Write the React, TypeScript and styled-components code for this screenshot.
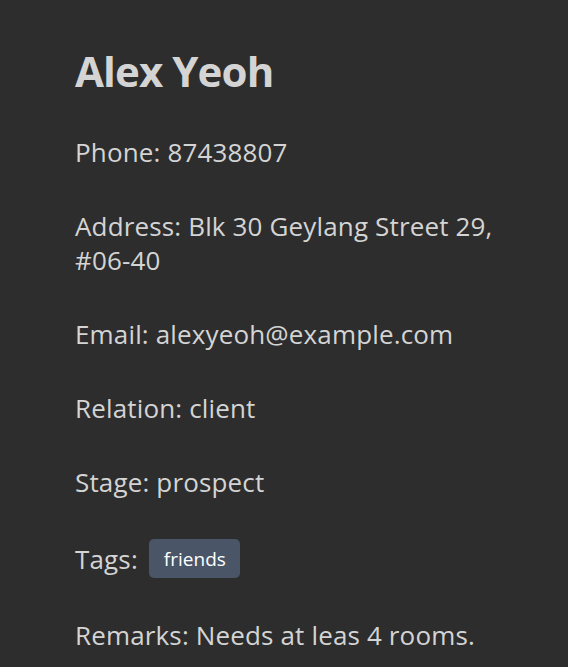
import React from "react";
import styled, { createGlobalStyle } from "styled-components";

const GlobalStyle = createGlobalStyle`
  html, body {
    margin: 0;
    padding: 0;
    background: #2d2d2d;
  }
  body {
    font-family: "Open Sans", "Noto Sans", sans-serif;
  }
`;

const Page = styled.main`
  min-height: 667px;
  box-sizing: border-box;
  padding: 46px 0 0 75px;
  color: #d4d4d4;
  font-family: "Open Sans", "Noto Sans", sans-serif;
`;

const Card = styled.section`
  width: 440px;
  display: flex;
  flex-direction: column;
  gap: 40px;
`;

const Name = styled.h1`
  margin: 0 0 -1px 0;
  font-size: 42px;
  line-height: 50px;
  font-weight: 700;
  letter-spacing: -0.9px;
  color: #d4d4d4;
`;

const Field = styled.p`
  margin: 0;
  font-size: 26px;
  line-height: 34px;
  letter-spacing: 0.15px;
`;

const TagRow = styled.div`
  display: flex;
  align-items: center;
  gap: 11px;
  font-size: 26px;
  line-height: 34px;
  letter-spacing: 0.15px;
`;

const Tag = styled.span`
  display: inline-flex;
  align-items: center;
  justify-content: center;
  height: 39px;
  padding: 0 14px 0 15px;
  border-radius: 5px;
  background: #4a5568;
  color: #ffffff;
  font-size: 19px;
  letter-spacing: 0;
`;

export default function App() {
  return (
    <>
      <GlobalStyle />
      <Page>
        <Card>
          <Name>Alex Yeoh</Name>
          <Field>Phone: 87438807</Field>
          <Field>Address: Blk 30 Geylang Street 29, #06-40</Field>
          <Field>Email: alexyeoh@example.com</Field>
          <Field>Relation: client</Field>
          <Field>Stage: prospect</Field>
          <TagRow>
            <span>Tags:</span>
            <Tag>friends</Tag>
          </TagRow>
          <Field>Remarks: Needs at leas 4 rooms.</Field>
        </Card>
      </Page>
    </>
  );
}
